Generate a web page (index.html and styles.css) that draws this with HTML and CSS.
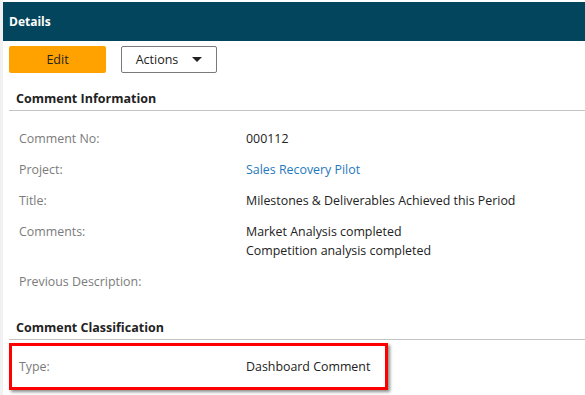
FILE: index.html
```html
<!DOCTYPE html>
<html lang="en">
<head>
    <meta charset="UTF-8">
    <meta name="viewport" content="width=device-width, initial-scale=1.0">
    <title>Details</title>
    <link rel="stylesheet" href="styles.css">
</head>
<body>
    <div class="page">
        <div class="header">Details</div>

        <div class="toolbar">
            <button class="btn btn-edit">Edit</button>
            <button class="btn btn-actions">Actions <span class="caret"></span></button>
        </div>

        <div class="section-title">Comment Information</div>
        <div class="fields">
            <div class="row">
                <div class="label">Comment No:</div>
                <div class="value">000112</div>
            </div>
            <div class="row">
                <div class="label">Project:</div>
                <div class="value"><a href="#">Sales Recovery Pilot</a></div>
            </div>
            <div class="row">
                <div class="label">Title:</div>
                <div class="value">Milestones &amp; Deliverables Achieved this Period</div>
            </div>
            <div class="row">
                <div class="label">Comments:</div>
                <div class="value">Market Analysis completed<br>Competition analysis completed</div>
            </div>
            <div class="row">
                <div class="label">Previous Description:</div>
                <div class="value"></div>
            </div>
        </div>

        <div class="section-title">Comment Classification</div>
        <div class="highlight">
            <div class="row">
                <div class="label">Type:</div>
                <div class="value">Dashboard Comment</div>
            </div>
        </div>
    </div>
</body>
</html>
```

FILE: styles.css
```css
body {
    margin: 0;
    font-family: "Open Sans", "Noto Sans", sans-serif;
    font-size: 12.4px;
    color: #222;
    background: #fff;
}

.page {
    border-left: 3px solid #f1f1f1;
    padding-top: 2px;
    min-height: 100vh;
    box-sizing: border-box;
}

.header {
    background-color: #03455c;
    color: #fff;
    font-weight: bold;
    font-size: 12px;
    height: 39px;
    display: flex;
    align-items: center;
    padding-left: 6px;
}

.toolbar {
    display: flex;
    gap: 15px;
    padding: 5px 6px 0;
}

.btn {
    font-family: inherit;
    font-size: 12.5px;
    color: #222;
    height: 27px;
    border-radius: 2px;
    cursor: pointer;
}

.btn-edit {
    width: 97px;
    background-color: #ffa200;
    border: none;
}

.btn-actions {
    width: 96px;
    background: #fff;
    border: 1px solid #7a7a7a;
    display: flex;
    align-items: center;
    justify-content: center;
    gap: 14px;
    padding: 0;
}

.caret {
    width: 0;
    height: 0;
    border-left: 5px solid transparent;
    border-right: 5px solid transparent;
    border-top: 5px solid #222;
}

.section-title {
    margin: 17px 0 0 6px;
    padding: 0 0 2px 7px;
    font-weight: bold;
    font-size: 12.5px;
    line-height: 18px;
    border-bottom: 1px solid #c4c4c4;
}

.fields {
    margin-left: 6px;
    padding: 12px 0 5px 10px;
}

.row {
    display: grid;
    grid-template-columns: 227px 1fr;
    line-height: 19px;
    padding: 6px 0;
}

.label {
    color: #7b7b7b;
}

.value a {
    color: #2478bd;
    text-decoration: none;
}

.highlight {
    margin: 3px 0 0 6px;
    width: 379px;
    box-sizing: border-box;
    border: 3px solid #f00;
    padding: 5px 0 5px 7px;
    box-shadow: 2px 2px 3px rgba(0, 0, 0, 0.45);
}
```
